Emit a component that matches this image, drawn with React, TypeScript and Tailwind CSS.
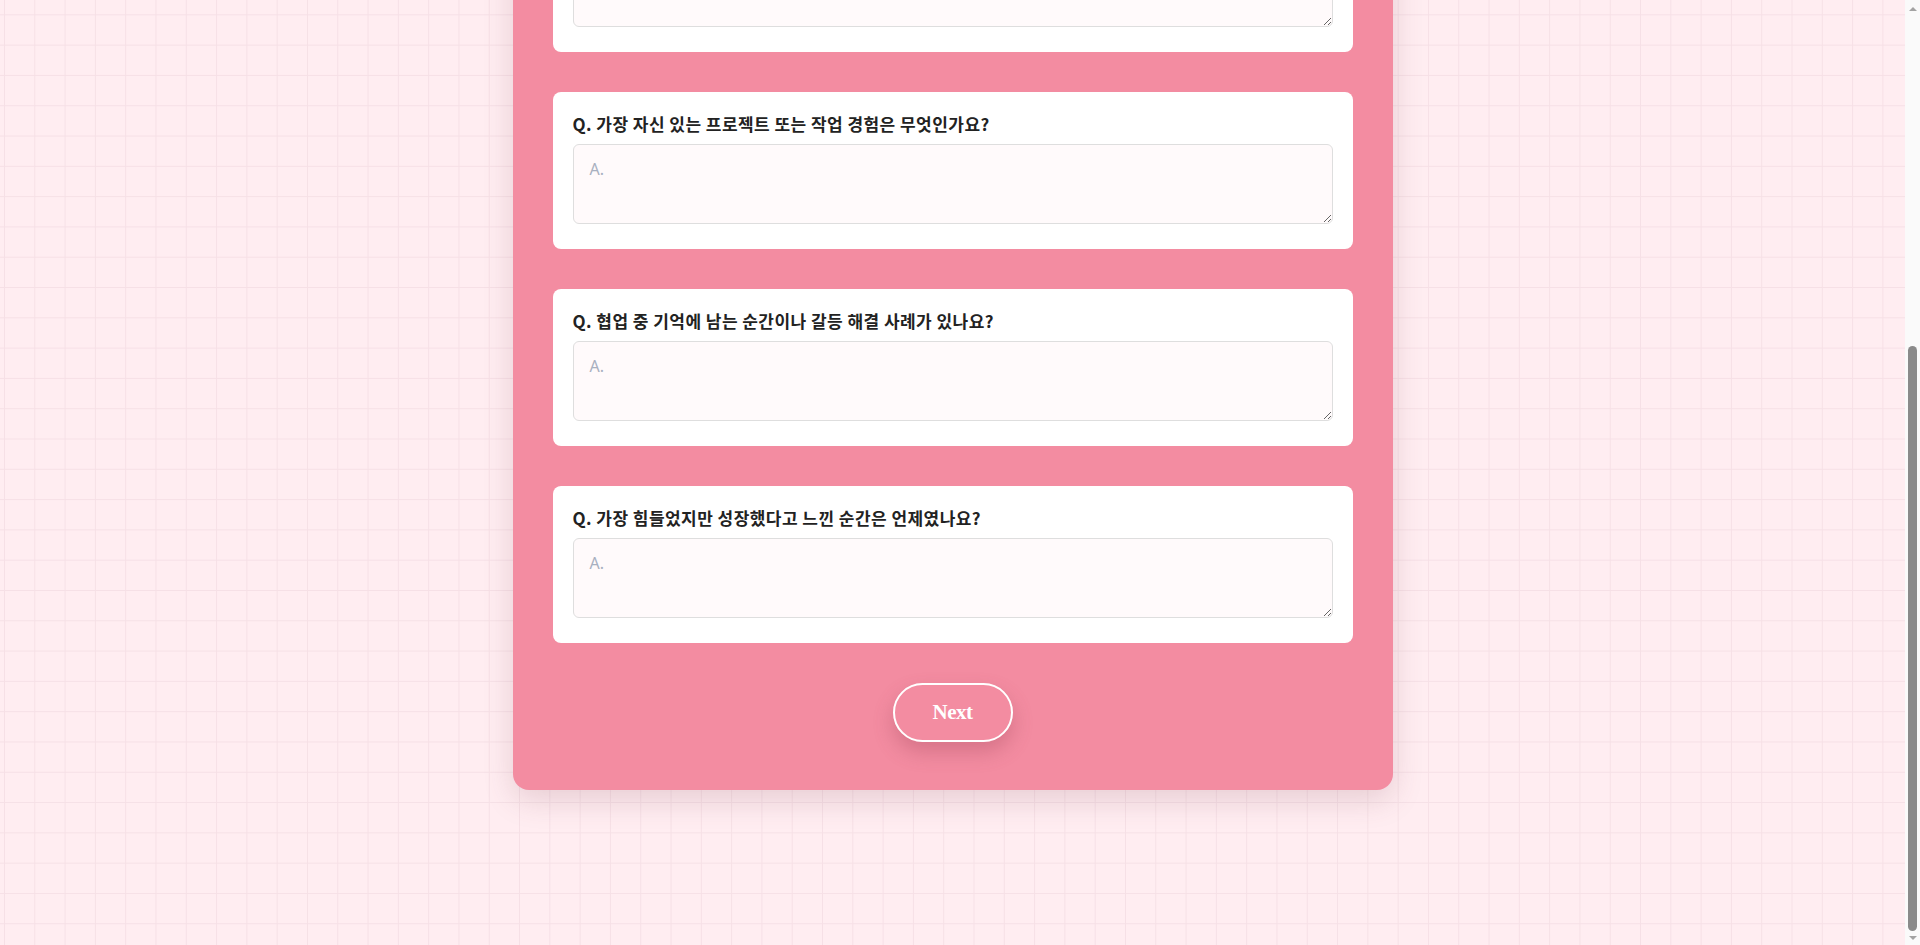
import React, { useLayoutEffect } from "react";

const questions = [
  "자신을 한 문장으로 소개해 주세요.",
  "개발자가 되기로 결심한 계기는 무엇인가요?",
  "가장 자신 있는 프로젝트 또는 작업 경험은 무엇인가요?",
  "협업 중 기억에 남는 순간이나 갈등 해결 사례가 있나요?",
  "가장 힘들었지만 성장했다고 느낀 순간은 언제였나요?",
];

function QuestionCard({ text }: { text: string }) {
  return (
    <div className="bg-white rounded-lg px-5 pt-5 pb-[25px]">
      <label className="block mb-2 text-[17px] leading-6 font-semibold tracking-[0.45px] text-[#222]">
        <span className="font-bold">Q.</span> {text}
      </label>
      <textarea
        placeholder="A."
        className="block w-full h-20 rounded-md border border-[#dedede] bg-[#fffafb] px-4 py-3 text-base leading-6 text-[#333] placeholder:text-[#a8b0c0] outline-none"
        style={{ fontFamily: '"Noto Sans", sans-serif' }}
      />
    </div>
  );
}

export default function App() {
  useLayoutEffect(() => {
    window.scrollTo(0, document.documentElement.scrollHeight);
  }, []);

  return (
    <div
      className="min-h-screen w-full pt-10 pb-[155px] pr-[15px] bg-[#ffedf1] bg-[linear-gradient(to_right,#f6e0e6_1px,transparent_1px),linear-gradient(to_bottom,#f6e0e6_1px,transparent_1px)] bg-[size:30.3px_30.3px] bg-[position:4px_-1px]"
      style={{ fontFamily: '"Noto Sans CJK KR", "Noto Sans", sans-serif' }}
    >
      <div className="w-[880px] mx-auto bg-[#f38ca1] rounded-2xl p-10 pb-12 shadow-[0_10px_30px_rgba(120,60,80,0.18)]">
        <div className="h-[108px] mb-10 flex flex-col items-center justify-center text-white">
          <h1 className="text-3xl font-bold" style={{ fontFamily: '"Liberation Serif", "Noto Sans CJK KR", serif' }}>
            Interview Note
          </h1>
          <p className="mt-2 text-base">나를 돌아보는 다섯 가지 질문</p>
        </div>
        <div className="flex flex-col gap-10">
          {questions.map((q) => (
            <QuestionCard key={q} text={q} />
          ))}
        </div>
        <div className="flex justify-center pt-10">
          <button
            className="w-[120px] h-[59px] rounded-full border-2 border-white text-white text-[21px] font-bold tracking-[-0.5px] shadow-[0_10px_20px_rgba(150,60,80,0.3)]"
            style={{ fontFamily: '"Liberation Serif", serif' }}
          >
            Next
          </button>
        </div>
      </div>
      <div className="fixed top-0 right-0 h-screen w-[15px] bg-[#fafafa] flex flex-col items-center">
        <div className="h-[17px] flex items-center justify-center">
          <div className="w-0 h-0 border-l-[4px] border-r-[4px] border-b-[4px] border-l-transparent border-r-transparent border-b-[#a3a3a3]" />
        </div>
        <div className="flex-1 w-full px-[3px] flex flex-col justify-end">
          <div className="h-[585px] w-full rounded-full bg-[#8a8a8a]" />
        </div>
        <div className="h-[14px] flex items-center justify-center">
          <div className="w-0 h-0 border-l-[4px] border-r-[4px] border-t-[4px] border-l-transparent border-r-transparent border-t-[#a3a3a3]" />
        </div>
      </div>
    </div>
  );
}
